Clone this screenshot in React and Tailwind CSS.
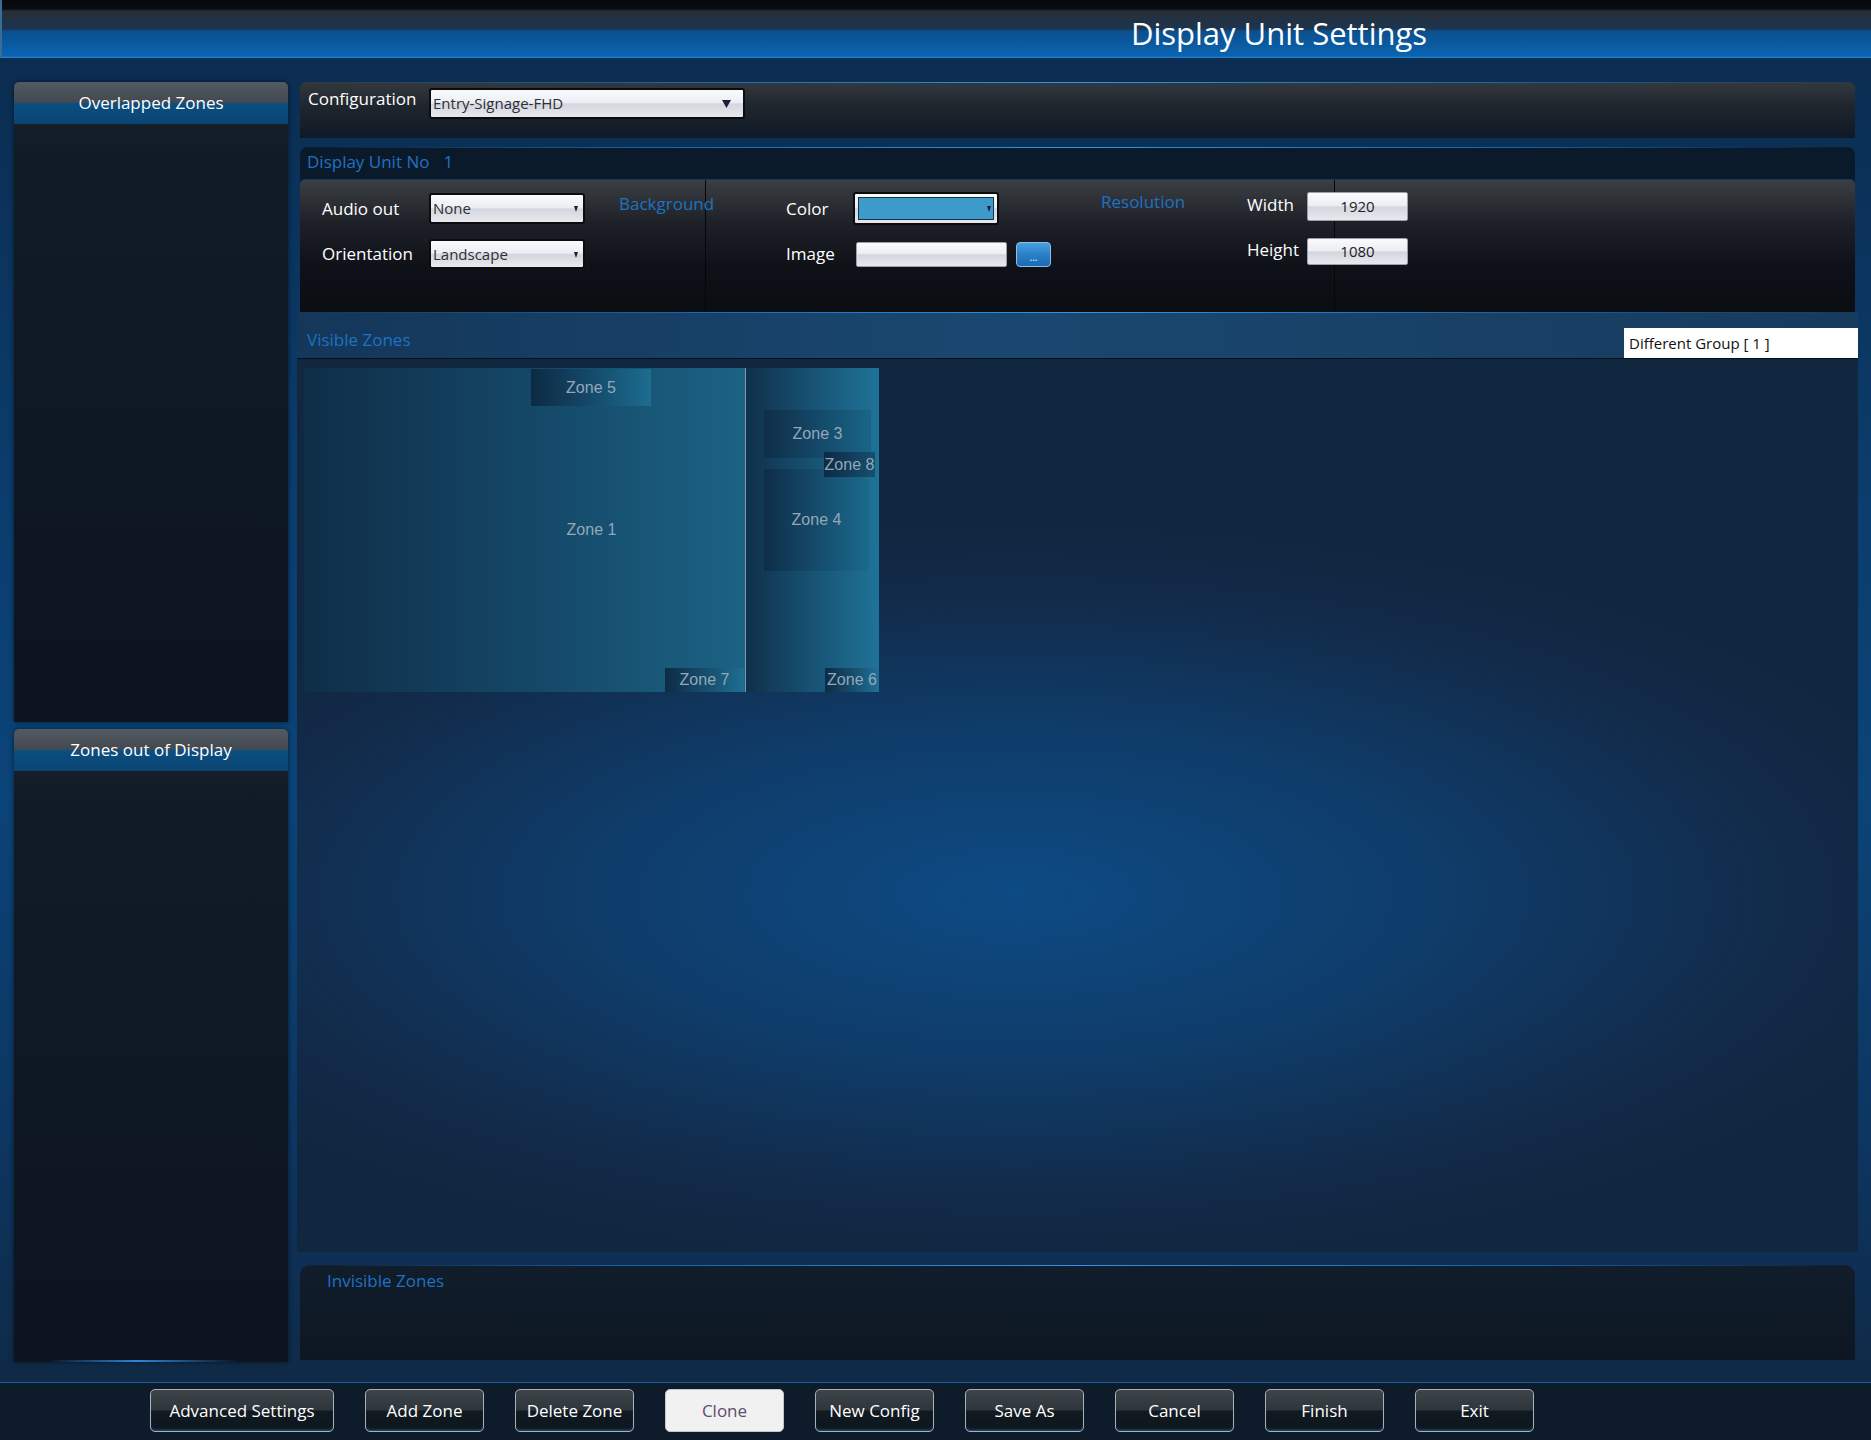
import React from "react";

// Display Unit Settings – zone layout editor

const gloss =
  "bg-[linear-gradient(to_bottom,#fafbfd_0%,#eceef3_46%,#d3d6de_52%,#e7e9ee_100%)]";
const blueText = "text-[#1e72c2]";

function Glow({ className = "" }) {
  return (
    <div
      className={`h-px shrink-0 bg-[linear-gradient(to_right,transparent_0%,#155f9f_20%,#2f95ea_50%,#155f9f_80%,transparent_100%)] ${className}`}
    />
  );
}

function Caret({ big }) {
  if (big) {
    return (
      <svg width="9" height="8" viewBox="0 0 9 8" className="shrink-0">
        <path d="M0 0 L9 0 L4.5 8 Z" fill="#1b1d3a" />
      </svg>
    );
  }
  return (
    <svg width="4" height="7" viewBox="0 0 4 7" className="shrink-0">
      <path d="M0 1 L4 1 L2 7 Z" fill="#1b1d3a" />
    </svg>
  );
}

function Select({ value, className, big }) {
  return (
    <div
      className={`shrink-0 flex items-center justify-between rounded-[3px] border-2 border-[#0b0c0e] ${gloss} pl-[2px] ${
        big ? "pr-[12px]" : "pr-[5px]"
      } text-[15px] text-[#2d2f35] ${className}`}
    >
      <span className="leading-none">{value}</span>
      <Caret big={big} />
    </div>
  );
}

function Field({ value, className }) {
  return (
    <div
      className={`shrink-0 flex items-center justify-center rounded-[2px] border border-[#9aa0a8] ${gloss} text-[15px] text-[#1e2024] ${className}`}
    >
      {value}
    </div>
  );
}

function SidePanel({ title, className = "", glowBottom }) {
  return (
    <section
      className={`flex flex-col rounded-t-[5px] bg-[linear-gradient(to_bottom,#1c2631_0px,#111b26_70px,#0c151f_100%)] shadow-[0_0_5px_rgba(0,0,0,0.55)] ${className}`}
    >
      <div className="h-[42px] shrink-0 rounded-t-[5px] bg-[linear-gradient(to_bottom,#535a61_0%,#41484f_50%,#0b4e80_50%,#0a4574_100%)] flex items-center justify-center text-[17px] text-white">
        {title}
      </div>
      <div className="flex-1" />
      {glowBottom && (
        <div className="h-[2px] bg-[linear-gradient(to_right,transparent_12%,#2a86dc_45%,transparent_82%)]" />
      )}
    </section>
  );
}

const zones = [
  {
    label: "Zone 1",
    cls: "left-[7px] top-[9px] w-[575px] h-[324px] bg-[linear-gradient(to_right,#0f2e48_0%,#154b6b_45%,#1c6384_77%,#1c6384_100%)]",
  },
  {
    label: "",
    cls: "left-[448px] top-[9px] w-[134px] h-[324px] border-l border-[#7f99ab] bg-[linear-gradient(to_right,#0f304a_0%,#174f6f_45%,#1f7398_100%)]",
  },
  {
    label: "Zone 5",
    cls: "left-[234px] top-[10px] w-[120px] h-[37px] bg-[linear-gradient(to_right,#0d2a43_0%,#144666_45%,#1c6d90_100%)]",
  },
  {
    label: "Zone 3",
    cls: "left-[467px] top-[51px] w-[107px] h-[48px] bg-[linear-gradient(to_right,#0f2e48_0%,#144868_50%,#1a6587_100%)]",
  },
  {
    label: "Zone 4",
    cls: "left-[467px] top-[110px] w-[105px] h-[102px] bg-[linear-gradient(to_right,#0f2e48_0%,#154b6b_50%,#1b6a8d_100%)]",
  },
  {
    label: "Zone 8",
    cls: "left-[527px] top-[93px] w-[51px] h-[25px] bg-[linear-gradient(to_right,#0d2a43_0%,#174f70_100%)]",
  },
  {
    label: "Zone 7",
    cls: "left-[368px] top-[309px] w-[79px] h-[24px] bg-[linear-gradient(to_right,#0e2b45_0%,#17506f_55%,#1e6f92_100%)]",
  },
  {
    label: "Zone 6",
    cls: "left-[528px] top-[309px] w-[54px] h-[24px] bg-[linear-gradient(to_right,#0e2b45_0%,#17506f_55%,#1e7196_100%)]",
  },
];

const buttons = [
  { label: "Advanced Settings", w: "w-[184px]" },
  { label: "Add Zone", w: "w-[119px]" },
  { label: "Delete Zone", w: "w-[119px]" },
  { label: "Clone", w: "w-[119px]", light: true },
  { label: "New Config", w: "w-[119px]" },
  { label: "Save As", w: "w-[119px]" },
  { label: "Cancel", w: "w-[119px]" },
  { label: "Finish", w: "w-[119px]" },
  { label: "Exit", w: "w-[119px]" },
];

export default function App() {
  return (
    <div className="w-[1871px] h-[1440px] flex flex-col overflow-hidden font-['Open_Sans',sans-serif] bg-[linear-gradient(to_bottom,#0b2b4d_0%,#0b3d6e_35%,#0b4479_55%,#0d3560_80%,#102740_100%)]">
      {/* Title bar */}
      <header className="h-[58px] shrink-0 flex items-center border-l-2 border-[#3a6c98] bg-[linear-gradient(to_bottom,#06080b_0px,#0a0d12_9px,#272e37_11px,#1c3550_29px,#0c4f8c_31px,#0a64b3_56px,#2a86d0_58px)] pl-[685px]">
        <h1 className="flex-1 text-center text-[31px] leading-none text-white pt-[8px]">
          Display Unit Settings
        </h1>
      </header>

      <div className="flex flex-1 min-h-0">
        {/* Sidebar */}
        <aside className="ml-[14px] mt-[24px] mb-[20px] w-[274px] flex flex-col gap-[7px]">
          <SidePanel title="Overlapped Zones" className="h-[640px]" />
          <SidePanel title="Zones out of Display" className="flex-1" glowBottom />
        </aside>

        {/* Main */}
        <main className="ml-[9px] w-[1561px] flex flex-col pt-[24px] pb-[22px]">
          {/* Configuration */}
          <section className="mx-[3px] h-[56px] shrink-0 flex flex-col rounded-t-[6px] bg-[linear-gradient(to_bottom,#34383e_0%,#1e252d_45%,#0f1a27_100%)]">
            <Glow />
            <div className="flex items-start pt-[5px] pl-[8px]">
              <span className="w-[121px] shrink-0 text-[17px] leading-[22px] text-white">Configuration</span>
              <Select value="Entry-Signage-FHD" big className="w-[316px] h-[31px]" />
            </div>
          </section>

          {/* Display unit */}
          <section className="mx-[3px] mt-[9px] h-[165px] shrink-0 flex flex-col rounded-t-[8px] bg-[#0b1a2b]">
            <Glow />
            <div className={`h-[31px] flex items-center pl-[7px] pb-[4px] text-[17px] ${blueText}`}>
              Display Unit No<span className="ml-[14px]">1</span>
            </div>
            <div className="flex-1 grid grid-cols-[406px_629px_1fr] rounded-t-[5px] border-t border-[#123c62] bg-[linear-gradient(to_bottom,#3b3e43_0%,#1d2127_33%,#0e1218_66%,#0a0d12_100%)] text-[17px] text-white">
              <div className="border-r border-[#040608] flex pl-[22px] pt-[13px]">
                <div className="flex flex-col gap-[15px] shrink-0">
                  <div className="flex items-center">
                    <span className="w-[107px] shrink-0">Audio out</span>
                    <Select value="None" className="w-[156px] h-[31px]" />
                  </div>
                  <div className="flex items-center">
                    <span className="w-[107px] shrink-0">Orientation</span>
                    <Select value="Landscape" className="w-[156px] h-[30px]" />
                  </div>
                </div>
                <span className={`ml-[34px] shrink-0 leading-[22px] whitespace-nowrap ${blueText}`}>Background</span>
              </div>

              <div className="border-r border-[#040608] flex pl-[80px] pt-[12px]">
                <div className="w-[315px] shrink-0 flex flex-col gap-[17px]">
                  <div className="flex items-center">
                    <span className="w-[67px] shrink-0">Color</span>
                    <div className={`shrink-0 w-[146px] h-[33px] rounded-[3px] border-2 border-[#0b0c0e] ${gloss} p-[3px]`}>
                      <div className="h-full border border-[#1b3347] bg-[#3c9bca] flex items-center justify-end pr-[2px]">
                        <Caret />
                      </div>
                    </div>
                  </div>
                  <div className="flex items-center">
                    <span className="w-[70px] shrink-0 mt-[-2px]">Image</span>
                    <Field value="" className="w-[151px] h-[25px]" />
                    <div className="ml-[9px] shrink-0 w-[35px] h-[25px] rounded-[4px] border border-[#8cc0ea] bg-[linear-gradient(to_bottom,#4a9ee0_0%,#2a80c8_50%,#1a6bb2_100%)] flex items-center justify-center text-[10px] leading-none text-white pt-[4px]">
                      ...
                    </div>
                  </div>
                </div>
                <span className={`w-[146px] shrink-0 leading-[22px] mt-[-1px] ${blueText}`}>Resolution</span>
                <div className="flex flex-col gap-[17px] shrink-0">
                  <div className="flex items-center">
                    <span className="w-[60px] shrink-0 mt-[-4px]">Width</span>
                    <Field value="1920" className="w-[101px] h-[29px]" />
                  </div>
                  <div className="flex items-center">
                    <span className="w-[60px] shrink-0 mt-[-4px]">Height</span>
                    <Field value="1080" className="w-[101px] h-[27px]" />
                  </div>
                </div>
              </div>
              <div />
            </div>
          </section>

          {/* Visible zones header */}
          <div className="h-[46px] shrink-0 flex flex-col bg-[linear-gradient(to_right,#14375a_0%,#1a4770_45%,#173b5d_100%)]">
            <Glow className="mx-[3px]" />
            <div className="flex-1 flex items-end justify-between">
              <span className={`pl-[10px] mb-[7px] text-[17px] leading-[22px] ${blueText}`}>Visible Zones</span>
              <div className="w-[234px] h-[30px] bg-white text-[15px] text-[#111] pl-[5px] flex items-center">
                Different Group [ 1 ]
              </div>
            </div>
          </div>

          {/* Zone canvas */}
          <div className="relative h-[894px] shrink-0 border-t border-[#07101a] bg-[radial-gradient(ellipse_62%_42%_at_46%_60%,#0d4b84_0%,#0f3c69_45%,#122b4a_80%,#11263f_100%)]">
            {zones.map((z, i) => (
              <div
                key={i}
                className={`absolute flex items-center justify-center font-['Liberation_Sans',Arial,sans-serif] text-[16px] text-[#93a8b8] whitespace-nowrap ${z.cls}`}
              >
                {z.label}
              </div>
            ))}
          </div>

          {/* Invisible zones */}
          <section className="mx-[3px] mt-[13px] h-[95px] shrink-0 flex flex-col rounded-t-[10px] bg-[linear-gradient(to_bottom,#111d2b_0%,#0d1723_100%)]">
            <Glow />
            <span className={`pl-[27px] pt-[4px] text-[17px] leading-[22px] ${blueText}`}>Invisible Zones</span>
          </section>
        </main>
      </div>

      {/* Footer buttons */}
      <footer className="h-[58px] shrink-0 border-t border-[#1b5c9c] bg-[#0e1b2b] flex items-start pt-[6px] pl-[150px] gap-[31px]">
        {buttons.map((b) =>
          b.light ? (
            <button
              key={b.label}
              className={`${b.w} h-[43px] rounded-[5px] border border-[#c3c6ca] bg-[#f1f1f2] text-[17px] text-[#5b4d6c]`}
            >
              {b.label}
            </button>
          ) : (
            <button
              key={b.label}
              className={`${b.w} h-[43px] rounded-[5px] border border-[#a9b0b6] bg-[linear-gradient(to_bottom,#3d454a_0%,#2e363c_48%,#121a21_52%,#0e161d_100%)] shadow-[inset_0_-3px_3px_-2px_rgba(45,140,230,0.55)] text-[17px] text-white`}
            >
              {b.label}
            </button>
          )
        )}
      </footer>
    </div>
  );
}
